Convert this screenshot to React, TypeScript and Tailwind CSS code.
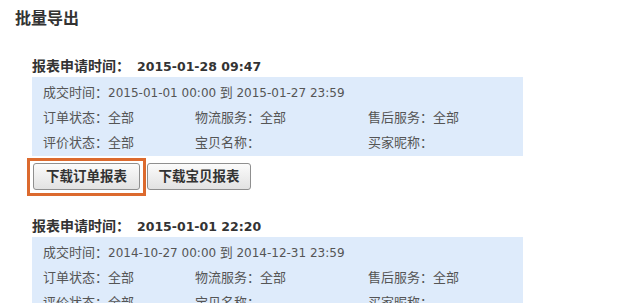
import React from "react";

const regular = { fontFamily: '"Liberation Sans", "Noto Sans CJK SC", sans-serif' };
const latin = { fontFamily: '"DejaVu Sans", "Noto Sans CJK SC", sans-serif' };
const boldFont = { fontFamily: '"DejaVu Sans", "Noto Sans CJK SC", sans-serif' };

type Rec = {
  applied: string;
  from: string;
  to: string;
  showButtons: boolean;
};

const records: Rec[] = [
  { applied: "2015-01-28 09:47", from: "2015-01-01 00:00", to: "2015-01-27 23:59", showButtons: true },
  { applied: "2015-01-01 22:20", from: "2014-10-27 00:00", to: "2014-12-31 23:59", showButtons: false },
];

function Num({ children }: { children: React.ReactNode }) {
  return (
    <span className="text-[12px]" style={latin}>
      {children}
    </span>
  );
}

function Section({ rec, first }: { rec: Rec; first: boolean }) {
  return (
    <div className={first ? "mt-[26px] ml-[17px]" : "mt-[19px] ml-[17px]"}>
      <div className="h-[20px] leading-[20px] font-bold text-[#333] whitespace-nowrap mb-[2px]">
        <span className="text-[14px]" style={boldFont}>报表申请时间：</span>
        <span className="text-[12.5px] ml-[7px]" style={boldFont}>{rec.applied}</span>
      </div>
      <div className="w-[491px] bg-[#deebfb] pt-[3px] pb-[1px] pl-[11px] text-[13px] text-[#555]" style={regular}>
        <div className="h-[25px] leading-[25px] whitespace-nowrap">
          成交时间：<Num>{rec.from}</Num> 到 <Num>{rec.to}</Num>
        </div>
        <div className="grid grid-cols-[152px_173px_1fr] h-[25px] leading-[25px] whitespace-nowrap">
          <span>订单状态：全部</span>
          <span>物流服务：全部</span>
          <span>售后服务：全部</span>
        </div>
        <div className="grid grid-cols-[152px_173px_1fr] h-[25px] leading-[25px] whitespace-nowrap">
          <span>评价状态：全部</span>
          <span>宝贝名称：</span>
          <span>买家昵称：</span>
        </div>
      </div>
      {rec.showButtons && (
        <div className="flex items-start mt-[2px] -ml-[5px]">
          <div className="border-[3px] border-[#dc6a2e] pt-[2px] pb-[3px] px-[3px]">
            <button
              className="h-[27px] w-[107px] rounded-[3px] border border-[#8f8f8f] bg-gradient-to-b from-[#fbfbfb] to-[#e2e2e2] text-[13.5px] font-bold text-[#333]"
              style={boldFont}
            >
              下载订单报表
            </button>
          </div>
          <button
            className="ml-[1px] mt-[5px] h-[27px] w-[104px] rounded-[3px] border border-[#8f8f8f] bg-gradient-to-b from-[#fbfbfb] to-[#e2e2e2] text-[13.5px] font-bold text-[#333]"
            style={boldFont}
          >
            下载宝贝报表
          </button>
        </div>
      )}
    </div>
  );
}

export default function App() {
  return (
    <div className="w-[620px] h-[303px] overflow-hidden bg-white pt-[9px] pl-[15px]">
      <div className="h-[20px] leading-[20px] text-[16px] font-bold text-[#333]" style={boldFont}>
        批量导出
      </div>
      {records.map((r, i) => (
        <Section key={i} rec={r} first={i === 0} />
      ))}
    </div>
  );
}
